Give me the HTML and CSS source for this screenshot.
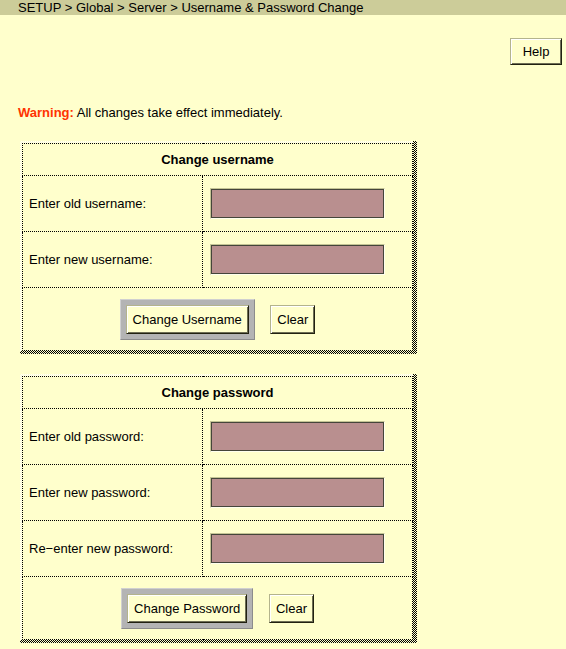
FILE: index.html
```html
<!DOCTYPE html>
<html>
<head>
<meta charset="utf-8">
<title>Username &amp; Password Change</title>
<link rel="stylesheet" href="styles.css">
</head>
<body>
<div class="crumb">SETUP &gt; Global &gt; Server &gt; Username &amp; Password Change</div>
<div class="toolbar"><button class="btn help">Help</button></div>
<p class="warning"><span class="warn-label">Warning:</span> All changes take effect immediately.</p>

<div class="frame first">
  <div class="frame-in">
    <table class="form">
      <tr><th colspan="2" class="head">Change username</th></tr>
      <tr><td class="label">Enter old username:</td><td class="cell"><input class="field" type="text"></td></tr>
      <tr><td class="label">Enter new username:</td><td class="cell"><input class="field" type="text"></td></tr>
      <tr><td colspan="2" class="actions">
        <span class="default"><button class="btn">Change Username</button></span>
        <button class="btn">Clear</button>
      </td></tr>
    </table>
  </div>
</div>

<div class="frame second">
  <div class="frame-in">
    <table class="form">
      <tr><th colspan="2" class="head">Change password</th></tr>
      <tr><td class="label">Enter old password:</td><td class="cell"><input class="field" type="password"></td></tr>
      <tr><td class="label">Enter new password:</td><td class="cell"><input class="field" type="password"></td></tr>
      <tr><td class="label">Re&minus;enter new password:</td><td class="cell"><input class="field" type="password"></td></tr>
      <tr><td colspan="2" class="actions">
        <span class="default"><button class="btn">Change Password</button></span>
        <button class="btn">Clear</button>
      </td></tr>
    </table>
  </div>
</div>
</body>
</html>
```
FILE: styles.css
```css
html, body {
  margin: 0;
  padding: 0;
  background: #ffffcc;
  color: #000;
  font-family: "Liberation Sans", Arial, sans-serif;
  font-size: 13px;
}

.crumb {
  height: 15px;
  line-height: 15px;
  background: #cccc99;
  padding-left: 18px;
  white-space: nowrap;
  overflow: hidden;
}

.toolbar {
  display: flex;
  justify-content: flex-end;
  padding: 23px 4px 0 0;
}

.btn {
  font-family: "Liberation Sans", Arial, sans-serif;
  font-size: 13px;
  color: #000;
  background: #ffffcc;
  height: 29px;
  padding: 0 6px;
  border: 1px solid;
  border-color: #b4b48c #222211 #222211 #b4b48c;
  box-shadow: inset 1px 1px #ffffff, inset -1px -1px #6e6e55;
  cursor: pointer;
}

.help {
  width: 52px;
  height: 27px;
}

.warning {
  margin: 40px 0 0 0;
  padding-left: 18px;
  line-height: 16px;
}

.warn-label {
  color: #ff3300;
  font-weight: bold;
}

.frame {
  width: 393px;
  margin-left: 20px;
  padding: 0 4px 3px 0;
  background: repeating-conic-gradient(#000 0 25%, #ffffcc 0 50%) 0 0 / 2px 2px;
}

.frame.first {
  margin-top: 20px;
}

.frame.second {
  margin-top: 20px;
}

.frame-in {
  padding: 2px 0 0 2px;
  background: repeating-conic-gradient(#ffffff 0 25%, #ffffcc 0 50%) 0 0 / 2px 2px;
}

.form {
  width: 391px;
  border-collapse: collapse;
  background: #ffffcc;
}

.form th, .form td {
  border: 1px dotted #000;
  padding: 0;
}

.head {
  height: 31px;
  text-align: center;
  font-weight: bold;
}

.label {
  width: 173px;
  height: 55px;
  padding-left: 6px !important;
}

.cell {
  padding-left: 7px !important;
}

.field {
  display: block;
  box-sizing: border-box;
  width: 175px;
  height: 31px;
  margin: 0;
  background: #b98f8f;
  border: 1px solid;
  border-color: #c4c494 #ffffee #ffffee #c4c494;
  box-shadow: inset 0 0 0 1px #45453a;
}

.actions {
  height: 62px;
  text-align: center;
}

.default {
  display: inline-block;
  vertical-align: middle;
  padding: 5px;
  background: #b4b4b4;
  border: 1px solid;
  border-color: #d0d0d0 #8c8c8c #8c8c8c #d0d0d0;
  margin-right: 12px;
}

.default .btn {
  display: block;
}

.actions > .btn {
  vertical-align: middle;
}
```
